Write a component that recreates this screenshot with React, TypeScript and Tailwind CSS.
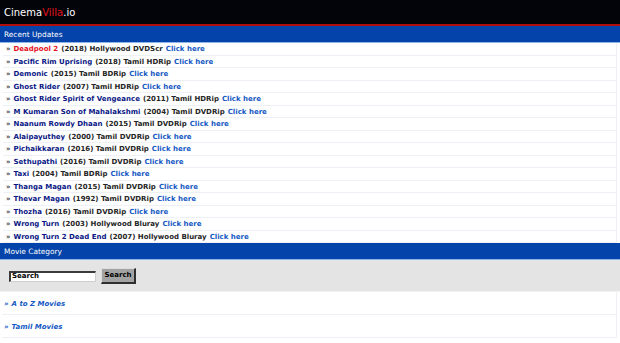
import React from "react";

type Update = { title: string; year: string; info: string; hot?: boolean };

const updates: Update[] = [
  { title: "Deadpool 2", year: "2018", info: "Hollywood DVDScr", hot: true },
  { title: "Pacific Rim Uprising", year: "2018", info: "Tamil HDRip" },
  { title: "Demonic", year: "2015", info: "Tamil BDRip" },
  { title: "Ghost Rider", year: "2007", info: "Tamil HDRip" },
  { title: "Ghost Rider Spirit of Vengeance", year: "2011", info: "Tamil HDRip" },
  { title: "M Kumaran Son of Mahalakshmi", year: "2004", info: "Tamil DVDRip" },
  { title: "Naanum Rowdy Dhaan", year: "2015", info: "Tamil DVDRip" },
  { title: "Alaipayuthey", year: "2000", info: "Tamil DVDRip" },
  { title: "Pichaikkaran", year: "2016", info: "Tamil DVDRip" },
  { title: "Sethupathi", year: "2016", info: "Tamil DVDRip" },
  { title: "Taxi", year: "2004", info: "Tamil BDRip" },
  { title: "Thanga Magan", year: "2015", info: "Tamil DVDRip" },
  { title: "Thevar Magan", year: "1992", info: "Tamil DVDRip" },
  { title: "Thozha", year: "2016", info: "Tamil DVDRip" },
  { title: "Wrong Turn", year: "2003", info: "Hollywood Bluray" },
  { title: "Wrong Turn 2 Dead End", year: "2007", info: "Hollywood Bluray" },
];

const SectionBar = ({ label }: { label: string }) => (
  <div className="h-[17px] bg-[#0443a9] border-b border-[#8fb4ea] flex items-center px-[4px] pt-[1px] text-[7.4px] text-white">
    {label}
  </div>
);

export default function App() {
  return (
    <div className="w-[620px] h-[343px] overflow-hidden bg-white font-['DejaVu_Sans',sans-serif]">
      {/* top bar */}
      <div className="h-[24px] bg-[#03040a] flex items-center px-[4px] text-[10px] text-white">
        Cinema<span className="text-[#e0121b]">Villa</span>.io
      </div>
      <div className="h-[2px] bg-[#b00d0d]" />

      <SectionBar label="Recent Updates" />
      <div className="pl-[3px] pr-[3px]">
        {updates.map((u) => (
          <div
            key={u.title}
            className="h-[12.5px] flex items-center gap-[3px] pl-[3px] pt-[1px] border-b border-r border-[#edf0f5] text-[7px] font-bold text-[#262626] whitespace-nowrap"
          >
            <span className="text-[#444]">»</span>
            <span className={u.hot ? "text-[#e3121d]" : "text-[#0a1785]"}>{u.title}</span>
            <span>({u.year}) {u.info}</span>
            <span className="text-[#1559c4]">Click here</span>
          </div>
        ))}
      </div>

      <SectionBar label="Movie Category" />
      <div className="h-[32px] bg-[#e4e4e4] flex items-center gap-[5px] pl-[9px] pt-[1px] border-b border-[#f3f3f3]">
        <div className="w-[87px] h-[11px] bg-white border-t-[2px] border-l-[2px] border-b border-r border-t-[#3a3a3a] border-l-[#3a3a3a] border-b-[#cfcfcf] border-r-[#cfcfcf] flex items-center pl-[1px] text-[7px] font-bold text-black">
          Search
        </div>
        <div className="w-[35px] h-[16px] bg-[#a3a3a3] border-t border-l border-b-[2px] border-r-[2px] border-t-[#dcdcdc] border-l-[#dcdcdc] border-b-[#2e2e2e] border-r-[#2e2e2e] flex items-center justify-center text-[7px] font-bold text-black">
          Search
        </div>
      </div>

      <div className="pl-[2px] pr-[3px]">
        {["A to Z Movies", "Tamil Movies"].map((c) => (
          <div
            key={c}
            className="h-[23px] flex items-center gap-[3px] pl-[2px] pt-[3px] border-b border-r border-[#edf0f5] text-[7px] font-bold italic text-[#1559c4]"
          >
            <span>»</span>
            <span>{c}</span>
          </div>
        ))}
      </div>
    </div>
  );
}
